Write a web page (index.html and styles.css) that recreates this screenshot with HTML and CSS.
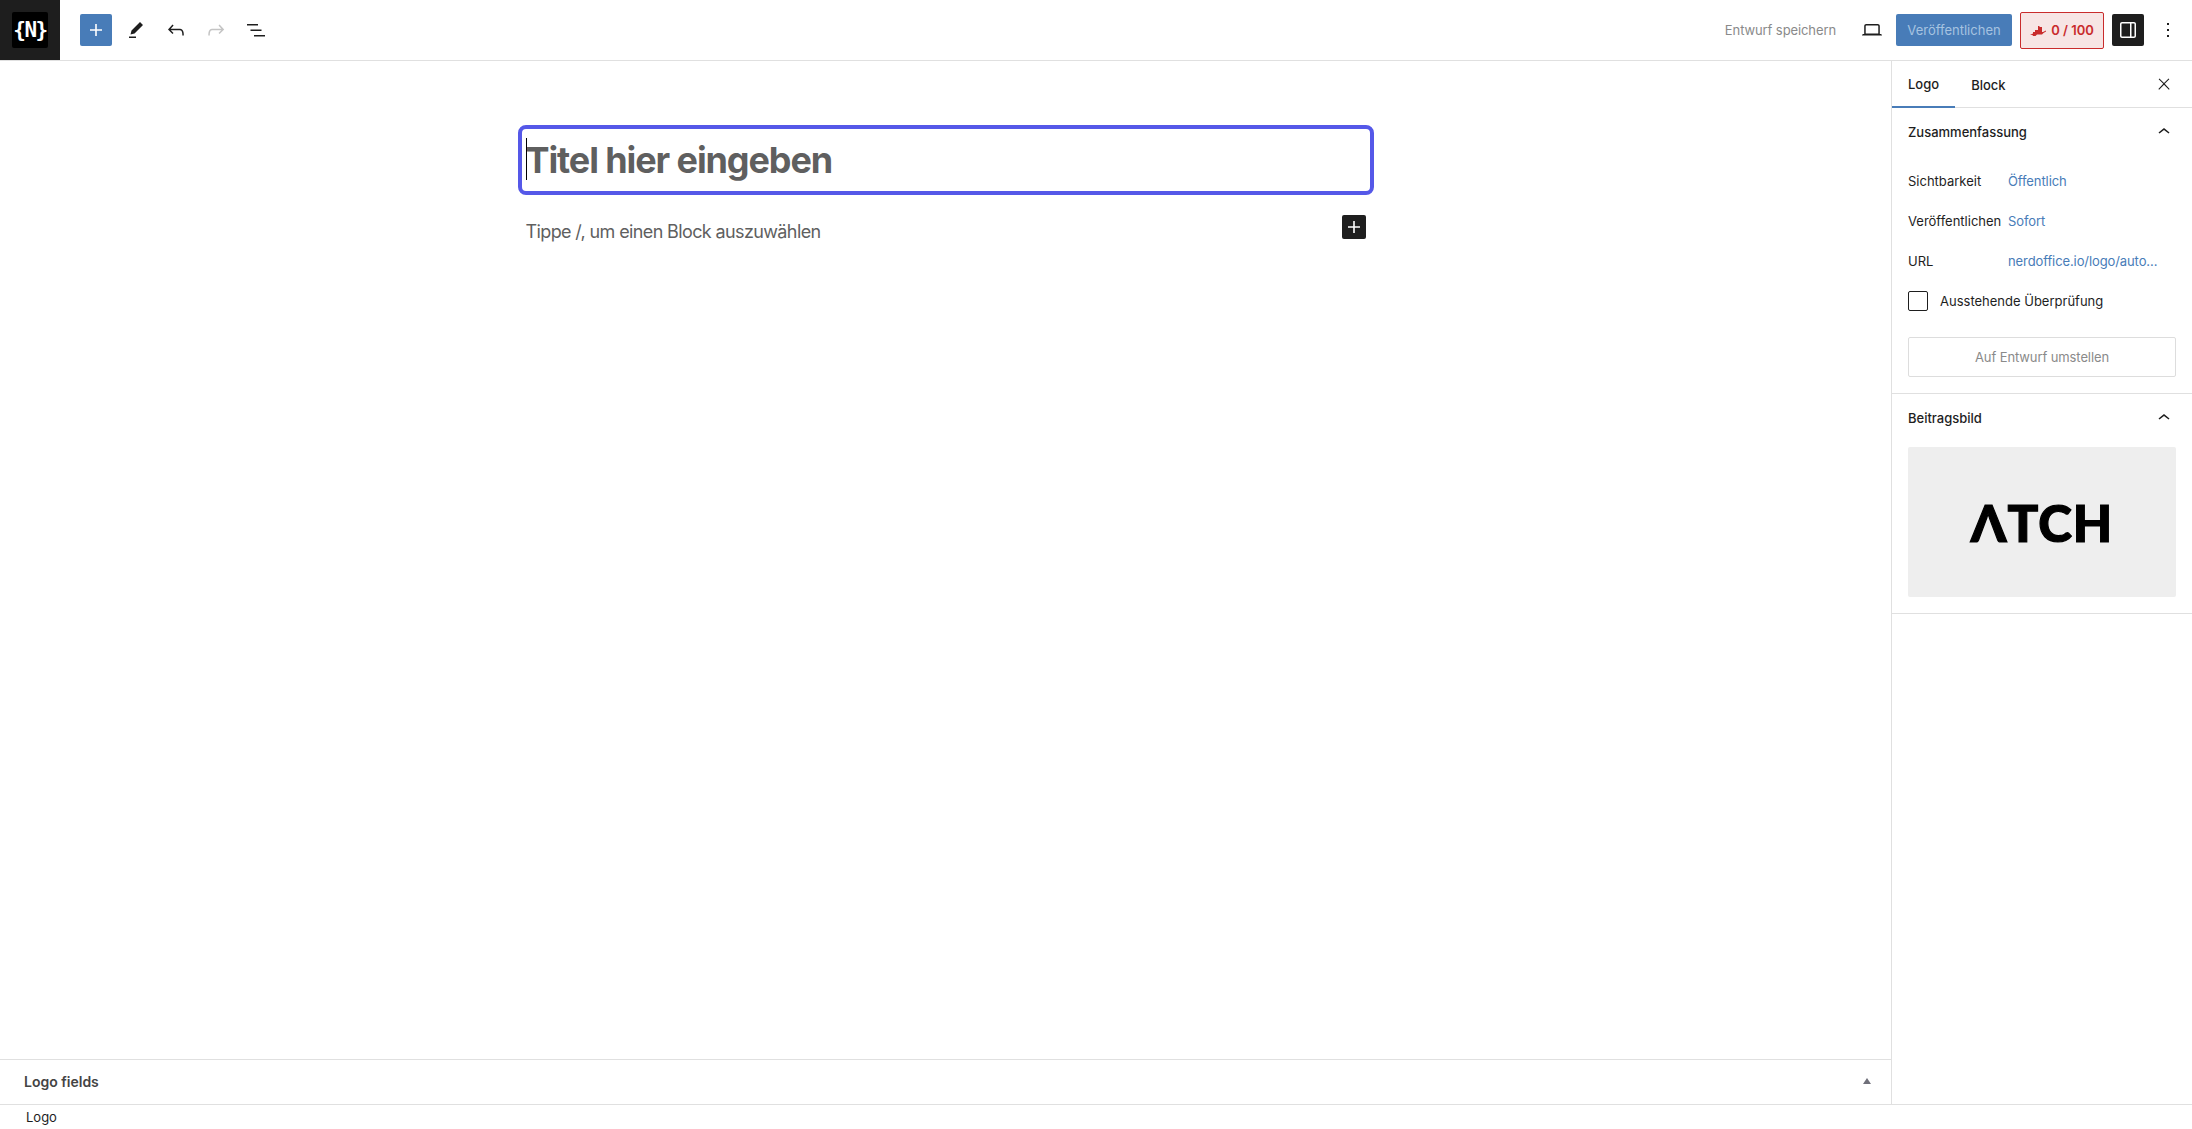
FILE: index.html
```html
<!DOCTYPE html>
<html lang="de">
<head>
  <meta charset="UTF-8" />
  <title>Logo bearbeiten</title>
  <link rel="stylesheet" href="styles.css">
</head>
<body>
  <div class="app">
    <header class="topbar">
      <div class="site-logo"><span class="site-logo-mark">{N}</span></div>
      <div class="tools">
        <button class="icon-btn inserter"><svg viewBox="0 0 24 24"><path d="M18 11.2h-5.2V6h-1.6v5.2H6v1.6h5.2V18h1.6v-5.2H18z"/></svg></button>
        <button class="icon-btn"><svg viewBox="0 0 24 24"><path d="m19 7-3-3-8.5 8.5-1 4 4-1L19 7Zm-7 11.5H5V20h7v-1.5Z"/></svg></button>
        <button class="icon-btn"><svg viewBox="0 0 24 24"><path d="M18.3 11.7c-.6-.6-1.4-.9-2.3-.9H6.7l2.9-3.3-1.1-1-4.5 5L8.5 16l1-1-2.7-2.7H16c.5 0 .9.2 1.3.5 1 1 1 3.4 1 4.5v.3h1.5v-.2c0-1.5 0-4.3-1.5-5.7z"/></svg></button>
        <button class="icon-btn disabled"><svg viewBox="0 0 24 24"><path d="M15.6 6.5l-1.1 1 2.9 3.3H8c-.9 0-1.7.3-2.3.9-1.4 1.5-1.4 4.2-1.4 5.6v.2h1.5v-.3c0-1.1 0-3.5 1-4.5.3-.3.7-.5 1.3-.5h9.2L14.5 15l1.1 1.1 4.6-4.6-4.6-5z"/></svg></button>
        <button class="icon-btn"><svg viewBox="0 0 24 24"><path d="M3 6h11v1.5H3V6Zm3.5 5.5h11V13h-11v-1.5ZM21 17H10v1.5h11V17Z"/></svg></button>
      </div>
      <div class="actions">
        <span class="save-draft">Entwurf speichern</span>
        <button class="icon-btn preview"><svg viewBox="0 0 24 24"><path d="M20.5 16h-.7V8c0-1.1-.9-2-2-2H6.2c-1.1 0-2 .9-2 2v8h-.7c-.8 0-1.5.7-1.5 1.5h20c0-.8-.7-1.5-1.500-1.5zM5.700 8c0-.3.2-.5.5-.5h11.600c.3 0 .5.2.5.5v7.600H5.700V8z"/></svg></button>
        <button class="publish">Veröffentlichen</button>
        <button class="score">
          <svg viewBox="0 0 16 11"><path d="M0 10l3-1.500V7h2V5h3V1h1.500v1H12v5h1l3-1.500v1L13.500 8 12 9.500H7L5.500 11H2.500l.5-1z"/></svg>
          0 / 100
        </button>
        <button class="icon-btn toggle"><svg viewBox="0 0 24 24"><path d="M18 4H6c-1.100 0-2 .9-2 2v12c0 1.100.9 2 2 2h12c1.100 0 2-.9 2-2V6c0-1.100-.9-2-2-2zm-4 14.500H6c-.3 0-.5-.2-.5-.5V6c0-.3.2-.5.500-.5h8v13zm4.500-.5c0 .3-.2.5-.5.500h-2.500v-13H18c.3 0 .5.2.5.5v12z"/></svg></button>
        <button class="icon-btn more"><svg viewBox="0 0 24 24"><path d="M13 19h-2v-2h2v2zm0-6h-2v-2h2v2zm0-6h-2V5h2v2z"/></svg></button>
      </div>
    </header>

    <div class="main">
      <div class="editor-col">
        <main class="editor">
          <div class="canvas">
            <div class="title-box">
              <span class="caret"></span>
              <h1>Titel hier eingeben</h1>
            </div>
            <div class="block-row">
              <p>Tippe /, um einen Block auszuwählen</p>
              <button class="add-block"><svg viewBox="0 0 24 24"><path d="M18 11.2h-5.2V6h-1.6v5.2H6v1.6h5.2V18h1.6v-5.2H18z"/></svg></button>
            </div>
          </div>
        </main>
        <div class="meta-box">
          <h2>Logo fields</h2>
          <span class="meta-arrow"></span>
        </div>
      </div>

      <aside class="sidebar">
        <div class="tabs">
          <span class="tab active">Logo</span>
          <span class="tab">Block</span>
          <button class="icon-btn close"><svg viewBox="0 0 24 24"><path d="M13 11.800l6.100-6.300-1-1-6.100 6.200-6.100-6.200-1 1 6.100 6.300-6.500 6.700 1 1 6.500-6.600 6.500 6.600 1-1z"/></svg></button>
        </div>

        <section class="panel summary">
          <div class="panel-head">
            <span>Zusammenfassung</span>
            <svg viewBox="0 0 24 24"><path d="M6.500 12.400L12 8l5.500 4.400-.9 1.200L12 10l-4.500 3.600-1-1.200z"/></svg>
          </div>
          <div class="row"><span class="row-label">Sichtbarkeit</span><a>Öffentlich</a></div>
          <div class="row"><span class="row-label">Veröffentlichen</span><a>Sofort</a></div>
          <div class="row"><span class="row-label">URL</span><a>nerdoffice.io/logo/auto...</a></div>
          <label class="check-row"><span class="checkbox"></span>Ausstehende Überprüfung</label>
          <button class="switch-draft">Auf Entwurf umstellen</button>
        </section>

        <section class="panel featured">
          <div class="panel-head">
            <span>Beitragsbild</span>
            <svg viewBox="0 0 24 24"><path d="M6.500 12.400L12 8l5.500 4.400-.9 1.200L12 10l-4.500 3.600-1-1.200z"/></svg>
          </div>
          <div class="thumb"><span>ΛTCH</span></div>
        </section>
      </aside>
    </div>

    <footer class="breadcrumb">Logo</footer>
  </div>
</body>
</html>
```

FILE: styles.css
```css
* {
  margin: 0;
  padding: 0;
  box-sizing: border-box;
}

html, body {
  height: 100%;
  overflow: hidden;
}

body {
  background: #fff;
  color: #1e1e1e;
  font-family: Inter, "Noto Sans", sans-serif;
  font-size: 13px;
}

button {
  border: none;
  background: none;
  font: inherit;
}

.app {
  display: flex;
  flex-direction: column;
  height: 100vh;
}

/* top bar */
.topbar {
  display: flex;
  align-items: center;
  height: 61px;
  flex: none;
  border-bottom: 1px solid #e0e0e0;
}

.site-logo {
  width: 60px;
  height: 60px;
  background: #1e1e1e;
  display: flex;
  align-items: center;
  justify-content: center;
}

.site-logo-mark {
  width: 36px;
  height: 36px;
  background: #000;
  border-radius: 2px;
  color: #fff;
  font-family: "DejaVu Sans Mono", monospace;
  font-weight: bold;
  font-size: 21px;
  line-height: 36px;
  text-align: center;
  letter-spacing: -1.5px;
}

.tools {
  display: flex;
  gap: 8px;
  margin-left: 20px;
}

.icon-btn {
  width: 32px;
  height: 32px;
  border-radius: 2px;
  display: flex;
  align-items: center;
  justify-content: center;
  flex: none;
}

.icon-btn svg {
  width: 24px;
  height: 24px;
  fill: #1e1e1e;
}

.icon-btn.disabled svg {
  fill: #c4c4c4;
}

.inserter {
  background: #487cb8;
}

.inserter svg {
  fill: #fff;
}

.actions {
  display: flex;
  align-items: center;
  margin-left: auto;
  margin-right: 8px;
}

.save-draft {
  color: #8a8a8a;
  margin-right: 20px;
  letter-spacing: -0.1px;
}

.preview {
  margin-right: 8px;
}

.publish {
  width: 116px;
  height: 32px;
  background: #487cb8;
  color: #a6c3e0;
  border-radius: 2px;
  margin-right: 8px;
}

.score {
  width: 84px;
  height: 37px;
  display: flex;
  align-items: center;
  justify-content: center;
  gap: 5px;
  background: #f7e5e4;
  border: 1px solid #c92c2c;
  border-radius: 2px;
  color: #c92c2c;
  font-weight: 600;
  margin-right: 8px;
}

.score svg {
  width: 16px;
  height: 11px;
  fill: #c92c2c;
}

.toggle {
  background: #1e1e1e;
  margin-right: 8px;
}

.toggle svg {
  fill: #fff;
}

/* main area */
.main {
  flex: 1;
  display: flex;
  min-height: 0;
}

.editor-col {
  flex: 1;
  display: flex;
  flex-direction: column;
  min-width: 0;
}

.editor {
  flex: 1;
}

.canvas {
  width: 856px;
  margin: 64px auto 0;
}

.title-box {
  position: relative;
  height: 70px;
  border: 4px solid #5558e8;
  border-radius: 8px;
  padding-left: 4px;
  display: flex;
  align-items: center;
}

.title-box h1 {
  font-size: 36px;
  font-weight: 700;
  color: #5f5f5f;
  letter-spacing: -1.1px;
}

.caret {
  position: absolute;
  left: 4px;
  top: 9px;
  width: 1px;
  height: 42px;
  background: #000;
}

.block-row {
  display: flex;
  align-items: center;
  justify-content: space-between;
  padding: 26px 8px 0;
}

.block-row p {
  font-size: 18px;
  color: #5f5f5f;
  letter-spacing: -0.62px;
}

.add-block {
  width: 24px;
  height: 24px;
  background: #1e1e1e;
  border-radius: 2px;
  margin-top: -10px;
}

.add-block svg {
  width: 24px;
  height: 24px;
  fill: #fff;
  display: block;
}

.meta-box {
  height: 45px;
  flex: none;
  border-top: 1px solid #e0e0e0;
  display: flex;
  align-items: center;
  justify-content: space-between;
  padding: 0 20px 2px 24px;
}

.meta-box h2 {
  font-size: 14px;
  font-weight: 600;
  color: #444;
}

.meta-arrow {
  width: 0;
  height: 0;
  border-left: 4px solid transparent;
  border-right: 4px solid transparent;
  border-bottom: 6px solid #70707a;
}

/* sidebar */
.sidebar {
  width: 301px;
  flex: none;
  border-left: 1px solid #e0e0e0;
}

.tabs {
  height: 47px;
  display: flex;
  align-items: stretch;
  border-bottom: 1px solid #e0e0e0;
  position: relative;
}

.tab {
  padding: 0 16px;
  display: flex;
  align-items: center;
  font-weight: 500;
  color: #1e1e1e;
  margin-bottom: -1px;
}

.tab.active {
  border-bottom: 2px solid #487cb8;
}

.close {
  margin: 7px 12px 0 auto;
}

.close svg {
  width: 18px;
  height: 18px;
}

.panel {
  border-bottom: 1px solid #e0e0e0;
  padding: 0 16px;
}

.panel-head {
  height: 48px;
  display: flex;
  align-items: center;
  justify-content: space-between;
  font-weight: 500;
}

.panel-head svg {
  width: 24px;
  height: 24px;
  fill: #1e1e1e;
}

.summary {
  padding-bottom: 16px;
}

.row {
  height: 40px;
  display: flex;
  align-items: center;
}

.summary .panel-head {
  margin-bottom: 5px;
}

.row-label {
  width: 100px;
}

.row a {
  color: #487cb8;
  letter-spacing: -0.1px;
}

.check-row {
  display: flex;
  align-items: center;
  gap: 12px;
  height: 20px;
  margin-top: 10px;
}

.checkbox {
  width: 20px;
  height: 20px;
  border: 1px solid #1e1e1e;
  border-radius: 2px;
}

.switch-draft {
  display: block;
  width: 100%;
  height: 40px;
  margin-top: 26px;
  border: 1px solid #ddd;
  border-radius: 2px;
  color: #8a8a8a;
  letter-spacing: -0.1px;
}

.featured {
  padding-bottom: 16px;
}

.featured .panel-head {
  height: 48px;
  margin-bottom: 5px;
}

.thumb {
  height: 150px;
  background: #eee;
  border-radius: 2px;
  display: flex;
  align-items: center;
  justify-content: center;
}

.thumb span {
  font-family: Lato, sans-serif;
  font-weight: 900;
  font-size: 51px;
  color: #000;
  letter-spacing: 1px;
  -webkit-text-stroke: 1.2px #000;
}

.breadcrumb {
  height: 25px;
  flex: none;
  border-top: 1px solid #e0e0e0;
  padding: 4px 0 0 26px;
}
```
